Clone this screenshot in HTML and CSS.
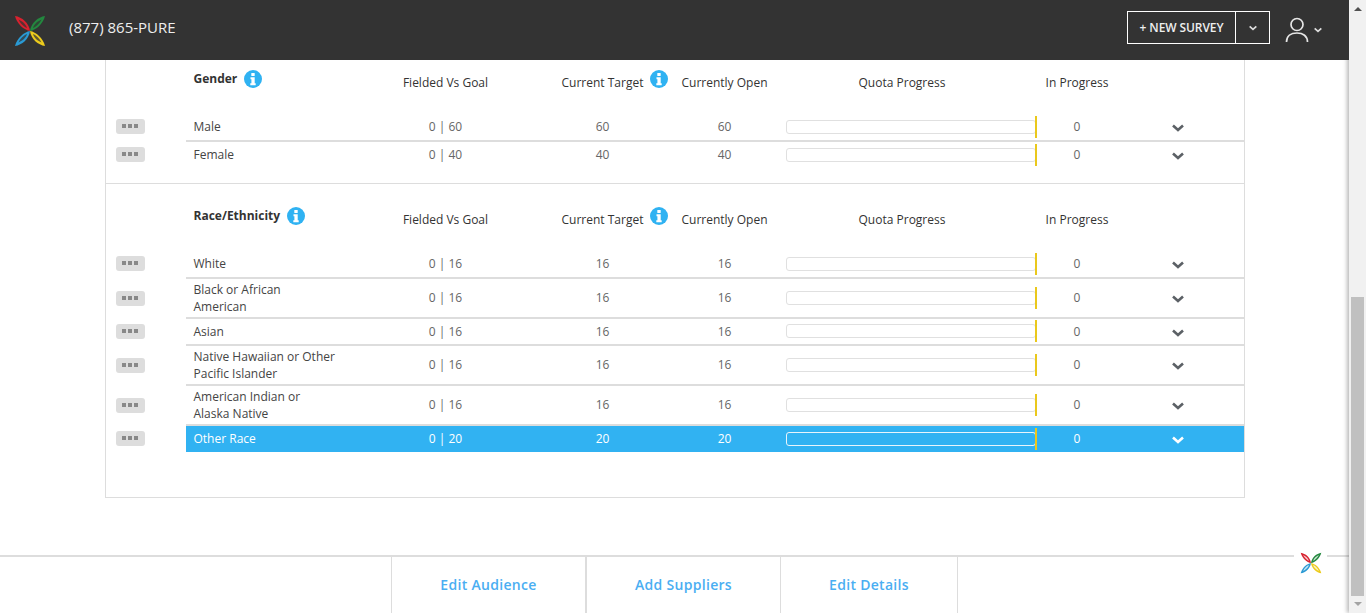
FILE: index.html
```html
<!DOCTYPE html>
<html lang="en">
<head>
<meta charset="utf-8">
<title>Quota Progress</title>
<link rel="stylesheet" href="styles.css">
</head>
<body>
<svg class="defs" width="0" height="0" aria-hidden="true">
  <defs>
    <symbol id="logo" viewBox="0 0 32 32">
      <path class="pt-red" d="M16 16C10 15 3 9 1 1c7 1 14 7 15 15z"/>
      <path class="pt-green" d="M16 16c6-1 13-7 15-15-7 1-14 7-15 15z"/>
      <path class="pt-blue" d="M16 16c-6 1-13 7-15 15 7-1 14-7 15-15z"/>
      <path class="pt-yellow" d="M16 16c6 1 13 7 15 15-7-1-14-7-15-15z"/>
      <path class="pt-hole" d="M13 13C10 12 6 8 4.500 4.500 8 6 12 9 13 13zM19 13c3-1 7-5 8.500-8.500C24 6 20 9 19 13zM13 19c-3 1-7 5-8.500 8.500C8 26 12 23 13 19zM19 19c3 1 7 5 8.500 8.500C24 26 20 23 19 19z"/>
    </symbol>
    <symbol id="info" viewBox="0 0 18 18">
      <circle cx="9" cy="9" r="9" fill="#2fb2f2"/>
      <rect x="7.300" y="3" width="3.400" height="3" rx=".6" fill="#fff"/>
      <path d="M6.500 7.300h4.200v6h1v1.900H6.300v-1.900h1.100V9.200h-.9z" fill="#fff"/>
    </symbol>
    <symbol id="chev" viewBox="0 0 12 8">
      <path d="M1 1.500l5 4.500 5-4.500" fill="none" stroke="currentColor" stroke-width="2.600"/>
    </symbol>
  </defs>
</svg>

<div class="shell">
  <header class="topbar">
    <div class="brand">
      <svg class="logo logo-dark"><use href="#logo"/></svg>
      <span class="phone">(877) 865-PURE</span>
    </div>
    <div class="actions">
      <div class="split">
        <span class="split-main">+ NEW SURVEY</span>
        <span class="split-caret"><svg class="caret"><use href="#chev"/></svg></span>
      </div>
      <svg class="user" viewBox="0 0 24 26" fill="none" stroke="#e6e6e6" stroke-width="1.700">
        <circle cx="12" cy="7.500" r="6"/>
        <path d="M1.500 25c0-6 4.500-9 10.500-9s10.500 3 10.500 9"/>
      </svg>
      <svg class="caret caret-user"><use href="#chev"/></svg>
    </div>
  </header>

  <main class="content">
    <section class="card">
      <div class="group group-first">
        <div class="head">
          <div class="head-title">Gender <svg class="info"><use href="#info"/></svg></div>
          <div class="head-col">Fielded Vs Goal</div>
          <div class="head-col head-target">Current Target <svg class="info info-over"><use href="#info"/></svg></div>
          <div class="head-col">Currently Open</div>
          <div class="head-col head-quota">Quota Progress</div>
          <div class="head-col">In Progress</div>
        </div>

        <div class="row row-lead">
          <div class="handle-cell"><span class="handle"><i></i><i></i><i></i></span></div>
          <div class="row-body row-one">
            <div class="name">Male</div><div class="num">0 | 60</div><div class="num">60</div><div class="num">60</div>
            <div class="prog"><span class="track"></span><span class="mark"></span></div>
            <div class="num">0</div><div class="num"><svg class="chev"><use href="#chev"/></svg></div>
          </div>
        </div>
        <div class="row">
          <div class="handle-cell"><span class="handle"><i></i><i></i><i></i></span></div>
          <div class="row-body row-end">
            <div class="name">Female</div><div class="num">0 | 40</div><div class="num">40</div><div class="num">40</div>
            <div class="prog"><span class="track"></span><span class="mark"></span></div>
            <div class="num">0</div><div class="num"><svg class="chev"><use href="#chev"/></svg></div>
          </div>
        </div>
      </div>

      <div class="group">
        <div class="head">
          <div class="head-title">Race/Ethnicity <svg class="info"><use href="#info"/></svg></div>
          <div class="head-col">Fielded Vs Goal</div>
          <div class="head-col head-target">Current Target <svg class="info info-over"><use href="#info"/></svg></div>
          <div class="head-col">Currently Open</div>
          <div class="head-col head-quota">Quota Progress</div>
          <div class="head-col">In Progress</div>
        </div>

        <div class="row row-lead">
          <div class="handle-cell"><span class="handle"><i></i><i></i><i></i></span></div>
          <div class="row-body row-one">
            <div class="name">White</div><div class="num">0 | 16</div><div class="num">16</div><div class="num">16</div>
            <div class="prog"><span class="track"></span><span class="mark"></span></div>
            <div class="num">0</div><div class="num"><svg class="chev"><use href="#chev"/></svg></div>
          </div>
        </div>
        <div class="row">
          <div class="handle-cell"><span class="handle"><i></i><i></i><i></i></span></div>
          <div class="row-body row-two">
            <div class="name">Black or African<br>American</div><div class="num">0 | 16</div><div class="num">16</div><div class="num">16</div>
            <div class="prog"><span class="track"></span><span class="mark"></span></div>
            <div class="num">0</div><div class="num"><svg class="chev"><use href="#chev"/></svg></div>
          </div>
        </div>
        <div class="row">
          <div class="handle-cell"><span class="handle"><i></i><i></i><i></i></span></div>
          <div class="row-body">
            <div class="name">Asian</div><div class="num">0 | 16</div><div class="num">16</div><div class="num">16</div>
            <div class="prog"><span class="track"></span><span class="mark"></span></div>
            <div class="num">0</div><div class="num"><svg class="chev"><use href="#chev"/></svg></div>
          </div>
        </div>
        <div class="row">
          <div class="handle-cell"><span class="handle"><i></i><i></i><i></i></span></div>
          <div class="row-body row-two">
            <div class="name">Native Hawaiian or Other<br>Pacific Islander</div><div class="num">0 | 16</div><div class="num">16</div><div class="num">16</div>
            <div class="prog"><span class="track"></span><span class="mark"></span></div>
            <div class="num">0</div><div class="num"><svg class="chev"><use href="#chev"/></svg></div>
          </div>
        </div>
        <div class="row">
          <div class="handle-cell"><span class="handle"><i></i><i></i><i></i></span></div>
          <div class="row-body row-two">
            <div class="name">American Indian or<br>Alaska Native</div><div class="num">0 | 16</div><div class="num">16</div><div class="num">16</div>
            <div class="prog"><span class="track"></span><span class="mark"></span></div>
            <div class="num">0</div><div class="num"><svg class="chev"><use href="#chev"/></svg></div>
          </div>
        </div>
        <div class="row">
          <div class="handle-cell"><span class="handle"><i></i><i></i><i></i></span></div>
          <div class="row-body row-end row-active">
            <div class="name">Other Race</div><div class="num">0 | 20</div><div class="num">20</div><div class="num">20</div>
            <div class="prog"><span class="track"></span><span class="mark"></span></div>
            <div class="num">0</div><div class="num"><svg class="chev"><use href="#chev"/></svg></div>
          </div>
        </div>
      </div>
    </section>
  </main>

  <footer class="foot">
    <a class="foot-link">Edit Audience</a>
    <a class="foot-link foot-mid">Add Suppliers</a>
    <a class="foot-link foot-last">Edit Details</a>
    <span class="foot-badge"><svg class="logo-small"><use href="#logo"/></svg></span>
  </footer>
</div>

<aside class="scrollbar">
  <span class="arrow-up"></span>
  <span class="thumb"></span>
  <span class="arrow-down"></span>
</aside>
</body>
</html>
```
FILE: styles.css
```css
* { box-sizing: border-box; }

html, body {
  margin: 0;
  height: 613px;
  overflow: hidden;
}

body {
  display: flex;
  background: #fff;
  color: #444;
  font-family: "Open Sans", "Liberation Sans", sans-serif;
  font-size: 12px;
}

.defs { position: absolute; }

.shell {
  width: 1349px;
  height: 613px;
  display: flex;
  flex-direction: column;
}

/* Top bar */
.topbar {
  position: relative;
  z-index: 3;
  flex: none;
  height: 60px;
  background: #333;
  display: flex;
  align-items: center;
  justify-content: space-between;
  padding: 0 27px 0 14px;
}

.brand { display: flex; align-items: center; }

.logo { width: 32px; height: 32px; margin-top: 2px; }
.logo-dark { --hole: #333; }

.pt-red { fill: #d8222f; }
.pt-green { fill: #23883f; }
.pt-blue { fill: #2a9ad4; }
.pt-yellow { fill: #eccb1d; }
.pt-hole { fill: var(--hole, #fff); opacity: .75; }

.phone {
  margin-left: 23px;
  margin-top: -6px;
  color: #eee;
  font-size: 15px;
}

.actions { display: flex; align-items: center; }

.split {
  display: flex;
  height: 33px;
  border: 1px solid #fff;
  color: #eee;
  margin-top: -5px;
}

.split-main {
  width: 108px;
  display: flex;
  align-items: center;
  justify-content: center;
  font-size: 12px;
  font-weight: 600;
  letter-spacing: -.1px;
  border-right: 1px solid #fff;
}

.split-caret {
  width: 33px;
  display: flex;
  align-items: center;
  justify-content: center;
}

.caret { width: 8px; height: 6px; color: #ddd; }

.user { width: 24px; height: 26px; margin-left: 15px; margin-top: 0; }
.caret-user { margin-left: 5px; }

/* Content */
.content {
  flex: none;
  height: 508px;
  margin-top: -13px;
  display: flex;
  justify-content: center;
  align-items: flex-start;
}

.card {
  width: 1140px;
  height: 451px;
  border: 1px solid #ddd;
  border-top: 0;
  background: #fff;
}

.group-first { padding-bottom: 15px; border-bottom: 1px solid #ddd; }

.head, .row-body {
  display: grid;
  grid-template-columns: 164px 192px 122px 122px 251px 81px 120px 1fr;
}

.head {
  height: 67px;
  margin-left: 80px;
  padding-top: 27px;
  align-items: start;
  line-height: 17px;
}

.head-title {
  display: flex;
  align-items: center;
  gap: 7px;
  margin-top: -6px;
  padding-left: 8px;
  color: #333;
  font-size: 12px;
  font-weight: 700;
}

.head-col { text-align: center; color: #333; font-size: 12px; }
.head-target { position: relative; }
.head-quota { padding-right: 18px; }

.info { flex: none; width: 18px; height: 18px; margin-top: 2px; }

.info-over {
  position: absolute;
  left: 108px;
  top: -6px;
}

.row { display: flex; align-items: center; }

.handle-cell {
  flex: none;
  width: 80px;
  padding-left: 10px;
  padding-bottom: 2px;
  display: flex;
}

.row-lead .handle-cell { padding-bottom: 4px; }

.handle {
  width: 29px;
  height: 15px;
  background: #ddd;
  border-radius: 3px;
  display: flex;
  align-items: center;
  justify-content: center;
  gap: 2px;
}

.handle i { width: 4px; height: 4px; margin-top: -1px; background: #888; }

.row-body {
  flex: 1;
  min-height: 27px;
  align-items: center;
  border-bottom: 2px solid #ddd;
  color: #666;
}

.row-one, .row-two, .row-end { padding-bottom: 1px; }
.row-one { min-height: 28px; }
.row-two { min-height: 40px; }
.row-end { min-height: 26px; border-bottom: 0; }

.row-active { background: #31b2f2; color: #fff; }
.row-active .name, .row-active .chev { color: #fff; }
.row-active .track { background: transparent; border-color: #e8f4fb; }

.name { padding-left: 8px; line-height: 17px; color: #444; }
.num { text-align: center; line-height: 17px; }

.prog { display: flex; align-items: center; margin-bottom: 1px; }
.row-one .prog, .row-two .prog, .row-end .prog { margin-bottom: -1px; }

.track {
  flex: 1;
  height: 14px;
  background: #fff;
  border: 1px solid #e0e0e0;
  border-radius: 3px;
  margin-right: -1px;
}

.mark { width: 2px; height: 22px; background: #eac81c; }

.chev {
  display: block;
  width: 12px;
  height: 8px;
  margin: 3px auto 0;
  color: #5c6166;
}

/* Footer */
.foot {
  position: relative;
  flex: 1;
  display: flex;
  justify-content: center;
  border-top: 2px solid #ddd;
}

.foot-link {
  width: 194px;
  padding-bottom: 2px;
  display: flex;
  align-items: center;
  justify-content: center;
  border-left: 1px solid #ddd;
  color: #4aaef2;
  font-size: 14px;
  font-weight: 600;
  letter-spacing: .3px;
}

.foot-mid { width: 195px; border-left-width: 2px; }

.foot-last {
  width: 178px;
  border-right: 1px solid #ddd;
}

.foot-badge {
  position: absolute;
  top: -5px;
  left: 1294px;
  width: 33px;
  height: 24px;
  display: flex;
  justify-content: center;
  background: #fff;
}

.logo-small { width: 22px; height: 22px; --hole: #fff; }

/* Scrollbar */
.scrollbar {
  position: relative;
  z-index: 2;
  flex: none;
  width: 17px;
  height: 613px;
  background: #f1f1f1;
  box-shadow: -2px 0 4px rgba(0, 0, 0, .28);
  display: flex;
  flex-direction: column;
  align-items: center;
}

.arrow-up {
  margin-top: 7px;
  border-left: 4px solid transparent;
  border-right: 4px solid transparent;
  border-bottom: 4px solid #505050;
}

.thumb {
  width: 13px;
  height: 299px;
  margin-top: 286px;
  background: #c0c0c0;
}

.arrow-down {
  margin-top: 6px;
  border-left: 4px solid transparent;
  border-right: 4px solid transparent;
  border-top: 4px solid #a3a3a3;
}
```
